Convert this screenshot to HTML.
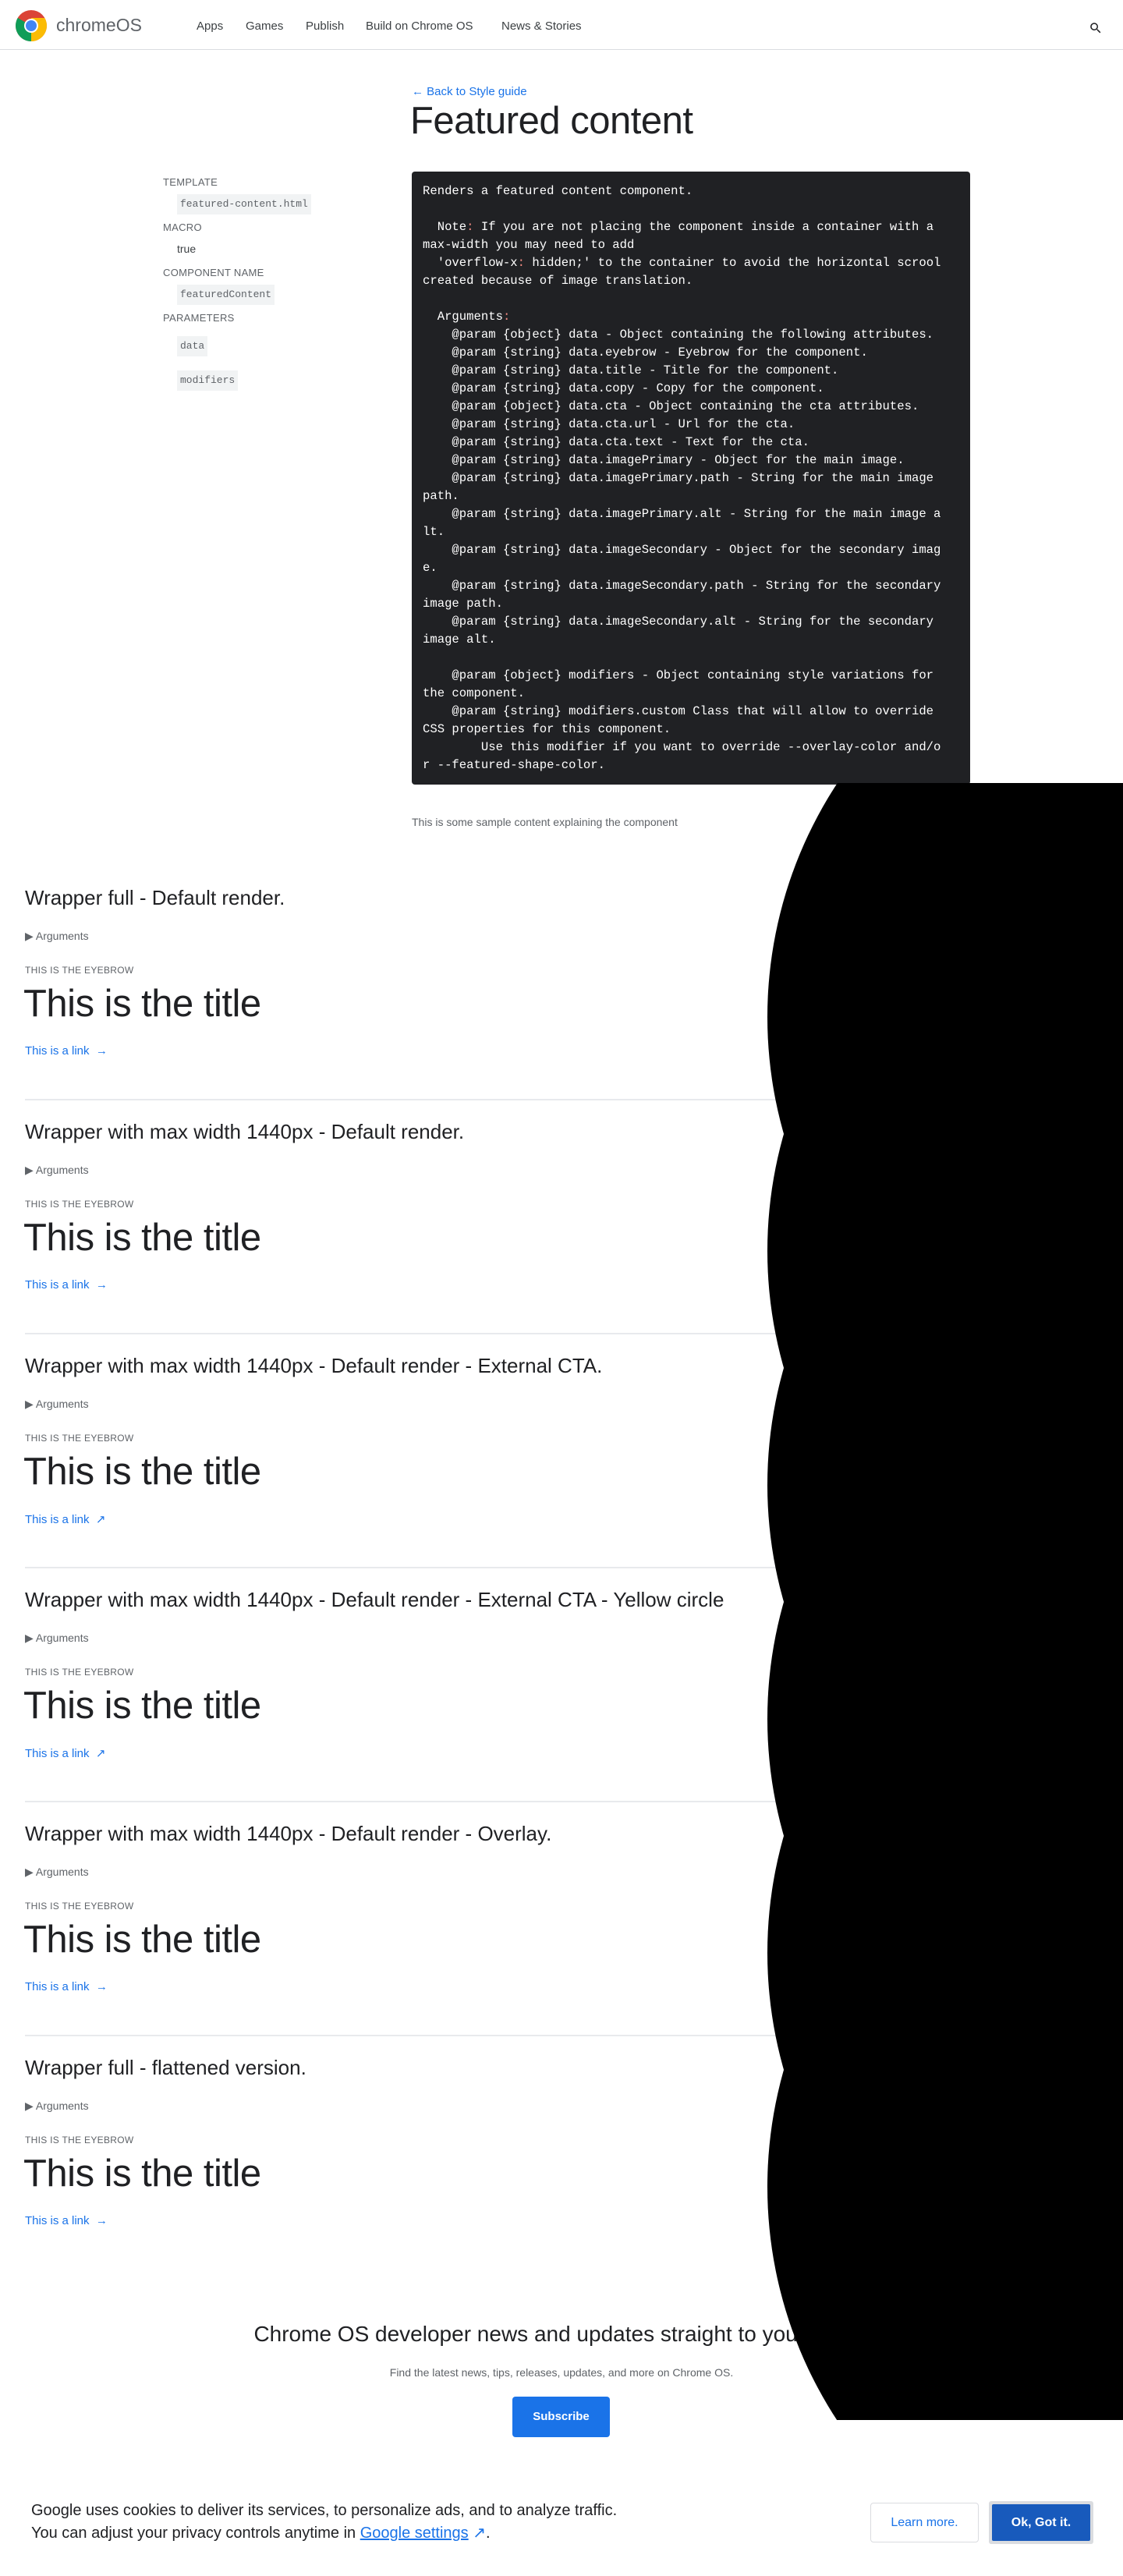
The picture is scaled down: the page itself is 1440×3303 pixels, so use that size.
<!DOCTYPE html>
<html><head><meta charset="utf-8">
<style>
*{margin:0;padding:0;box-sizing:border-box}
html,body{width:1440px;height:3303px;background:#fff;overflow:hidden}
body{position:relative;font-family:"Liberation Sans",Arial,sans-serif;color:#202124}
.a{position:absolute;white-space:nowrap}
.nav{font-size:15px;color:#3c4043;top:25px}
.side{font-size:13px;color:#5f6368;letter-spacing:.3px}
.chip{font-family:"Liberation Mono",monospace;font-size:13px;color:#5f6368;background:#f1f3f4;padding:5px 4px;height:26px;line-height:16px}
pre{position:absolute;left:528px;top:220px;width:716px;height:786px;background:#202124;border-radius:4px;color:#fff;font-family:"Liberation Mono",monospace;font-size:15.6px;line-height:23px;padding:14px 14px;white-space:pre;overflow:hidden}
.p{color:#f28b82}
.h2{font-size:26px;color:#202124;left:32px}
.arg{font-size:14px;color:#5f6368;left:32px}
.eb{font-size:12px;color:#5f6368;left:32px;letter-spacing:.3px}
.t{font-size:49px;color:#202124;left:30px;letter-spacing:-.5px}
.lk{font-size:15px;color:#1a73e8;left:32px}
.hr{position:absolute;left:32px;width:1376px;height:2px;background:#e8eaed}
</style></head><body>
<svg class="a" style="left:20px;top:13px" width="40" height="40" viewBox="0 0 40 40">
<circle cx="20" cy="20" r="20" fill="#db4437"/>
<path d="M20 20 L37.3 10 A20 20 0 0 1 20 40 Z" fill="#fbbc04"/>
<path d="M20 20 L20 40 A20 20 0 0 1 2.7 10 Z" fill="#0f9d58"/>
<path d="M20 20 L37.3 10 L20 10 Z" fill="#fbbc04"/>
<path d="M20 20 L2.7 10 L11.3 25 Z" fill="#0f9d58"/>
<path d="M20 20 L28.7 25 L20 40 Z" fill="#fbbc04"/>
<circle cx="20" cy="20" r="9" fill="#fff"/>
<circle cx="20" cy="20" r="7" fill="#4285f4"/>
</svg>
<div class="a" style="left:72px;top:19px;font-size:23px;color:#5f6368">chromeOS</div>
<div class="a nav" style="left:252px">Apps</div>
<div class="a nav" style="left:315px">Games</div>
<div class="a nav" style="left:392px">Publish</div>
<div class="a nav" style="left:469px">Build on Chrome OS</div>
<div class="a nav" style="left:643px">News &amp; Stories</div>
<svg class="a" style="left:1396px;top:27px" width="18" height="18" viewBox="0 0 24 24"><path d="M15.5 14h-.8l-.3-.3A6.5 6.5 0 1 0 9.5 16a6.5 6.5 0 0 0 4.2-1.6l.3.3v.8l5 5 1.5-1.5-5-5zm-6 0A4.5 4.5 0 1 1 14 9.5 4.5 4.5 0 0 1 9.5 14z" fill="#202124"/></svg>
<div class="a" style="left:0;top:63px;width:1440px;height:1px;background:#dadce0"></div>

<div class="a" style="left:528px;top:109px;font-size:15px;color:#1a73e8">&#8592; Back to Style guide</div>
<div class="a" style="left:526px;top:127px;font-size:49px;color:#202124;letter-spacing:-.5px">Featured content</div>

<div class="a side" style="left:209px;top:226px">TEMPLATE</div>
<div class="a chip" style="left:227px;top:249px">featured-content.html</div>
<div class="a side" style="left:209px;top:284px">MACRO</div>
<div class="a" style="left:227px;top:311px;font-size:14px;color:#3c4043">true</div>
<div class="a side" style="left:209px;top:342px">COMPONENT NAME</div>
<div class="a chip" style="left:227px;top:365px">featuredContent</div>
<div class="a side" style="left:209px;top:400px">PARAMETERS</div>
<div class="a chip" style="left:227px;top:431px">data</div>
<div class="a chip" style="left:227px;top:475px">modifiers</div>

<pre>Renders a featured content component.

  Note<span class="p">:</span> If you are not placing the component inside a container with a
max-width you may need to add
  'overflow-x<span class="p">:</span> hidden;' to the container to avoid the horizontal scrool
created because of image translation.

  Arguments<span class="p">:</span>
    @param {object} data - Object containing the following attributes.
    @param {string} data.eyebrow - Eyebrow for the component.
    @param {string} data.title - Title for the component.
    @param {string} data.copy - Copy for the component.
    @param {object} data.cta - Object containing the cta attributes.
    @param {string} data.cta.url - Url for the cta.
    @param {string} data.cta.text - Text for the cta.
    @param {string} data.imagePrimary - Object for the main image.
    @param {string} data.imagePrimary.path - String for the main image
path.
    @param {string} data.imagePrimary.alt - String for the main image a
lt.
    @param {string} data.imageSecondary - Object for the secondary imag
e.
    @param {string} data.imageSecondary.path - String for the secondary
image path.
    @param {string} data.imageSecondary.alt - String for the secondary
image alt.

    @param {object} modifiers - Object containing style variations for
the component.
    @param {string} modifiers.custom Class that will allow to override
CSS properties for this component.
        Use this modifier if you want to override --overlay-color and/o
r --featured-shape-color.</pre>

<div class="a" style="left:528px;top:1046px;font-size:14px;color:#5f6368">This is some sample content explaining the component</div>

<div class="a h2" style="top:1136px">Wrapper full - Default render.</div>
<div class="a arg" style="top:1192px">&#9654;&#xFE0E; Arguments</div>
<div class="a eb" style="top:1237px">THIS IS THE EYEBROW</div>
<div class="a t" style="top:1259px">This is the title</div>
<div class="a lk" style="top:1339px">This is a link &nbsp;&#8594;</div>
<div class="hr" style="top:1409px"></div>

<div class="a h2" style="top:1436px">Wrapper with max width 1440px - Default render.</div>
<div class="a arg" style="top:1492px">&#9654;&#xFE0E; Arguments</div>
<div class="a eb" style="top:1537px">THIS IS THE EYEBROW</div>
<div class="a t" style="top:1559px">This is the title</div>
<div class="a lk" style="top:1639px">This is a link &nbsp;&#8594;</div>
<div class="hr" style="top:1709px"></div>

<div class="a h2" style="top:1736px">Wrapper with max width 1440px - Default render - External CTA.</div>
<div class="a arg" style="top:1792px">&#9654;&#xFE0E; Arguments</div>
<div class="a eb" style="top:1837px">THIS IS THE EYEBROW</div>
<div class="a t" style="top:1859px">This is the title</div>
<div class="a lk" style="top:1939px">This is a link &nbsp;&#8599;</div>
<div class="hr" style="top:2009px"></div>

<div class="a h2" style="top:2036px">Wrapper with max width 1440px - Default render - External CTA - Yellow circle</div>
<div class="a arg" style="top:2092px">&#9654;&#xFE0E; Arguments</div>
<div class="a eb" style="top:2137px">THIS IS THE EYEBROW</div>
<div class="a t" style="top:2159px">This is the title</div>
<div class="a lk" style="top:2239px">This is a link &nbsp;&#8599;</div>
<div class="hr" style="top:2309px"></div>

<div class="a h2" style="top:2336px">Wrapper with max width 1440px - Default render - Overlay.</div>
<div class="a arg" style="top:2392px">&#9654;&#xFE0E; Arguments</div>
<div class="a eb" style="top:2437px">THIS IS THE EYEBROW</div>
<div class="a t" style="top:2459px">This is the title</div>
<div class="a lk" style="top:2539px">This is a link &nbsp;&#8594;</div>
<div class="hr" style="top:2609px"></div>

<div class="a h2" style="top:2636px">Wrapper full - flattened version.</div>
<div class="a arg" style="top:2692px">&#9654;&#xFE0E; Arguments</div>
<div class="a eb" style="top:2737px">THIS IS THE EYEBROW</div>
<div class="a t" style="top:2759px">This is the title</div>
<div class="a lk" style="top:2839px">This is a link &nbsp;&#8594;</div>

<div class="a" style="left:0;width:1440px;text-align:center;top:2977px;font-size:28px;color:#202124">Chrome OS developer news and updates straight to your inbox.</div>
<div class="a" style="left:0;width:1440px;text-align:center;top:3034px;font-size:14px;color:#5f6368">Find the latest news, tips, releases, updates, and more on Chrome OS.</div>
<div class="a" style="left:657px;top:3073px;width:125px;height:52px;background:#1a73e8;border-radius:4px;color:#fff;font-size:15px;font-weight:bold;text-align:center;line-height:52px">Subscribe</div>

<svg class="a" style="left:0;top:1004px;z-index:5" width="1440" height="2099" viewBox="0 1004 1440 2099">
<g fill="#000">
<circle cx="1530" cy="1304" r="546"/>
<circle cx="1530" cy="1604" r="546"/>
<circle cx="1530" cy="1904" r="546"/>
<circle cx="1530" cy="2204" r="546"/>
<circle cx="1530" cy="2504" r="546"/>
<circle cx="1530" cy="2804" r="546"/>
</g></svg>

<div class="a" style="left:0;top:3180px;width:1440px;height:123px;background:#fff;z-index:6"></div>
<div class="a" style="left:40px;top:3205px;font-size:20px;color:#202124;z-index:7;line-height:29px">Google uses cookies to deliver its services, to personalize ads, and to analyze traffic.<br>You can adjust your privacy controls anytime in <span style="color:#1a73e8;text-decoration:underline">Google settings</span> <span style="color:#1a73e8">&#8599;</span>.</div>
<div class="a" style="left:1116px;top:3209px;width:139px;height:51px;border:1px solid #dadce0;border-radius:4px;color:#1a73e8;font-size:16px;text-align:center;line-height:49px;z-index:7">Learn more.</div>
<div class="a" style="left:1268px;top:3207px;width:134px;height:55px;background:#dadce0;border-radius:3px;z-index:7"></div>
<div class="a" style="left:1272px;top:3211px;width:126px;height:47px;background:#185abc;border-radius:2px;color:#fff;font-size:16px;font-weight:bold;text-align:center;line-height:47px;z-index:8">Ok, Got it.</div>
</body></html>
